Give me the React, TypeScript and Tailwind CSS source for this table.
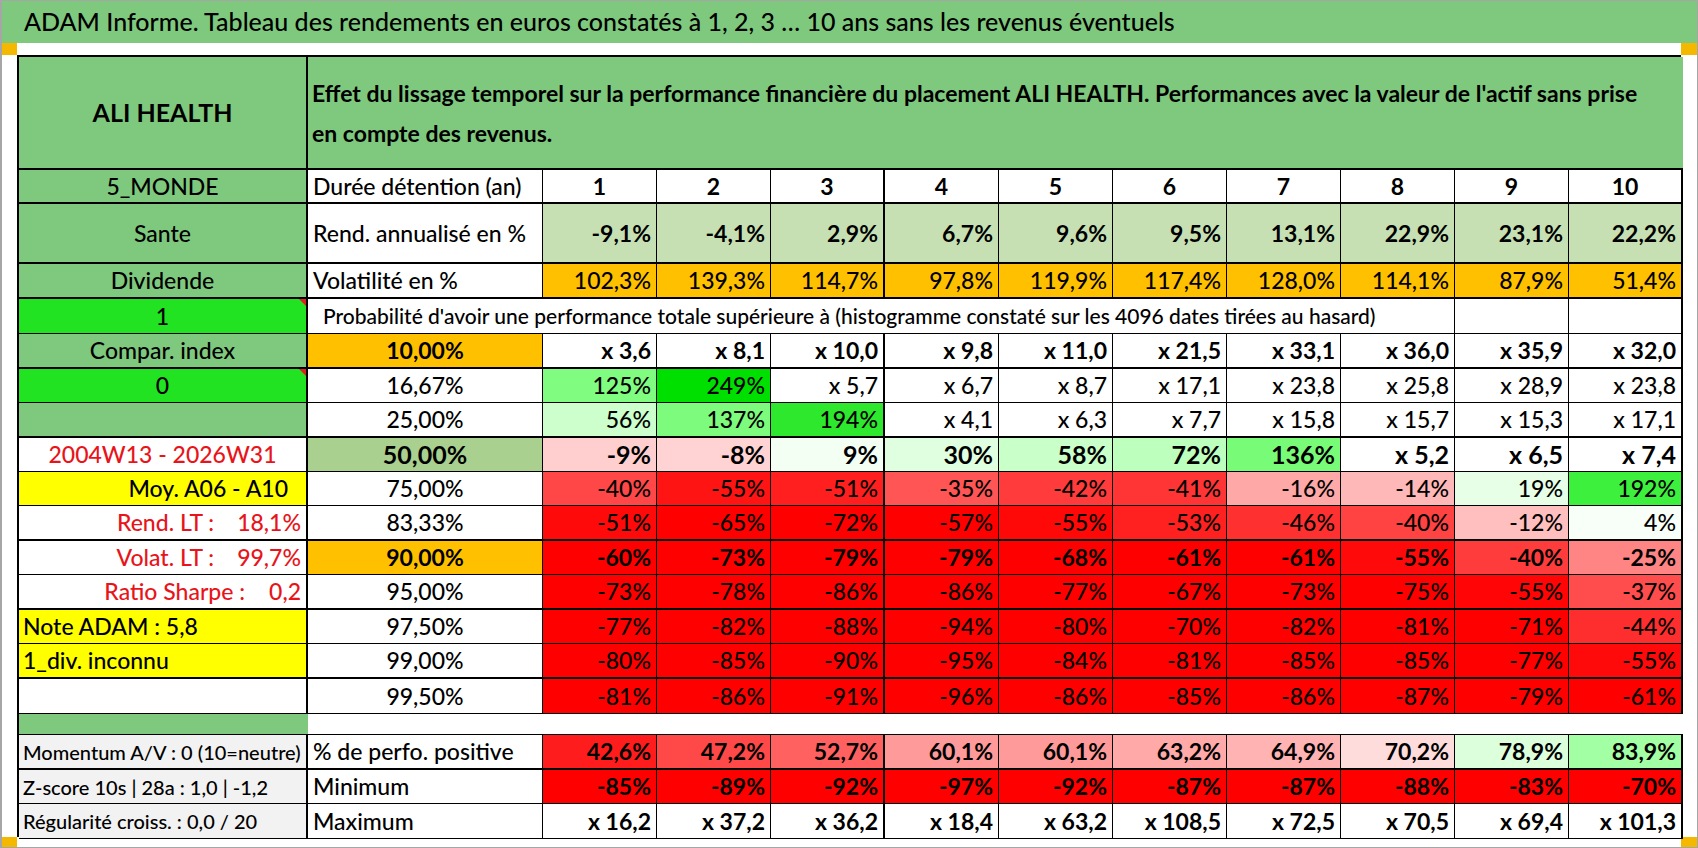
import type { ReactNode } from "react"
import { twMerge } from "tailwind-merge"

const GREEN = "bg-[#7fc97f]"
const LIME = "bg-[#22e322]"
const ORANGE = "bg-[#ffc000]"
const R = "bg-[#ff0000]"
const W = "bg-white"

function C({ className = "", children }: { className?: string; children?: ReactNode }) {
  return (
    <div
      className={twMerge(
        "relative flex items-center overflow-hidden whitespace-nowrap border-r border-b border-black leading-none",
        className
      )}
    >
      {children}
    </div>
  )
}

// little red comment marker in the corner of a cell
function Marker() {
  return (
    <span className="absolute right-0 top-0 h-0 w-0 border-l-[7px] border-t-[7px] border-l-transparent border-t-[#e02020]" />
  )
}

type RowProps = {
  vals: string[]
  bgs?: string[]
  className?: string
}

function Values({ vals, bgs, className = "" }: RowProps) {
  return (
    <>
      {vals.map((v, i) => (
        <C
          key={i}
          className={twMerge(
            "justify-end pr-[5px]",
            bgs ? bgs[i] : W,
            i === 2 || i === 9 ? "border-r-2" : "",
            className
          )}
        >
          {v}
        </C>
      ))}
    </>
  )
}

const reds = (last: string, ninth = R) => [R, R, R, R, R, R, R, R, ninth, last]

export default function App() {
  return (
    <div className="relative flex h-[848px] w-[1698px] flex-col overflow-hidden border-t border-r border-b border-l-2 border-[#a6a6a6] bg-white font-['Lato','Liberation_Sans',sans-serif] text-[23px] font-medium text-black">
      {/* title bar */}
      <div className={`flex h-[42px] items-center pl-[22px] text-[25px] ${GREEN}`}>
        ADAM Informe. Tableau des rendements en euros constatés à 1, 2, 3 … 10 ans sans les revenus éventuels
      </div>
      <div className="flex h-[12px]">
        <div className="w-[15px] bg-[#f5b800]" />
        <div className="flex-1" />
        <div className="w-[16px] bg-[#f5b800]" />
      </div>

      <div className="flex h-[782px]">
        <div className="w-[15px]" />
        <div className="grid w-[1664px] grid-cols-[289px_235px_repeat(10,114px)] grid-rows-[113px_34px_60px_35px_35px_35px_34px_35px_34px_34px_35px_34px_35px_34px_35px_35px_21px_35px_34px_35px] border-t-2 border-l-2 border-black">
          {/* header */}
          <C className={`justify-center border-r-2 border-b-2 text-[25px] font-bold ${GREEN}`}>ALI HEALTH</C>
          <C className={`col-span-11 border-r-0 border-b-2 pl-[4px] font-bold leading-[40px] ${GREEN}`}>
            <div>
              Effet du lissage temporel sur la performance financière du placement ALI HEALTH. Performances avec la valeur de l'actif sans prise
              <br />
              en compte des revenus.
            </div>
          </C>

          {/* durée */}
          <C className={`justify-center border-r-2 border-b-2 ${GREEN}`}>5_MONDE</C>
          <C className="border-b-2 pl-[5px]">Durée détention (an)</C>
          {["1", "2", "3", "4", "5", "6", "7", "8", "9", "10"].map((n, i) => (
            <C
              key={n}
              className={twMerge("justify-center border-b-2 font-bold", i === 2 || i === 9 ? "border-r-2" : "")}
            >
              {n}
            </C>
          ))}

          {/* rendement */}
          <C className={`justify-center border-r-2 border-b-2 ${GREEN}`}>Sante</C>
          <C className="border-b-2 pl-[5px]">Rend. annualisé en %</C>
          <Values
            vals={["-9,1%", "-4,1%", "2,9%", "6,7%", "9,6%", "9,5%", "13,1%", "22,9%", "23,1%", "22,2%"]}
            bgs={Array(10).fill("bg-[#c6e0b4]")}
            className="border-b-2 font-bold"
          />

          {/* volatilité */}
          <C className={`justify-center border-r-2 border-b-2 ${GREEN}`}>Dividende</C>
          <C className="border-b-2 pl-[5px]">Volatilité en %</C>
          <Values
            vals={["102,3%", "139,3%", "114,7%", "97,8%", "119,9%", "117,4%", "128,0%", "114,1%", "87,9%", "51,4%"]}
            bgs={Array(10).fill(ORANGE)}
            className="border-b-2"
          />

          {/* probabilité */}
          <C className={`justify-center border-r-2 ${LIME}`}>
            1
            <Marker />
          </C>
          <C className="col-span-9 pl-[15px] text-[21px]">
            Probabilité d'avoir une performance totale supérieure à (histogramme constaté sur les 4096 dates tirées au hasard)
          </C>
          <C />
          <C className="border-r-2" />

          {/* 10 % */}
          <C className={`justify-center border-r-2 border-b-2 ${GREEN}`}>Compar. index</C>
          <C className={`justify-center border-b-2 font-bold ${ORANGE}`}>10,00%</C>
          <Values
            vals={["x 3,6", "x 8,1", "x 10,0", "x 9,8", "x 11,0", "x 21,5", "x 33,1", "x 36,0", "x 35,9", "x 32,0"]}
            className="border-b-2 font-bold"
          />

          {/* 16,67 % */}
          <C className={`justify-center border-r-2 ${LIME}`}>
            0
            <Marker />
          </C>
          <C className="justify-center">16,67%</C>
          <Values
            vals={["125%", "249%", "x 5,7", "x 6,7", "x 8,7", "x 17,1", "x 23,8", "x 25,8", "x 28,9", "x 23,8"]}
            bgs={["bg-[#80fc80]", "bg-[#00e000]", W, W, W, W, W, W, W, W]}
          />

          {/* 25 % */}
          <C className={`border-r-2 border-b-2 ${GREEN}`} />
          <C className="justify-center border-b-2">25,00%</C>
          <Values
            vals={["56%", "137%", "194%", "x 4,1", "x 6,3", "x 7,7", "x 15,8", "x 15,7", "x 15,3", "x 17,1"]}
            bgs={["bg-[#ccffcc]", "bg-[#7dfb7d]", "bg-[#2ee82e]", W, W, W, W, W, W, W]}
            className="border-b-2"
          />

          {/* 50 % */}
          <C className="justify-center border-r-2 text-[#e8141a]">2004W13 - 2026W31</C>
          <C className="justify-center bg-[#a9d08e] text-[25px] font-bold">50,00%</C>
          <Values
            vals={["-9%", "-8%", "9%", "30%", "58%", "72%", "136%", "x 5,2", "x 6,5", "x 7,4"]}
            bgs={[
              "bg-[#ffcfcf]",
              "bg-[#ffd3d3]",
              "bg-[#f4fff4]",
              "bg-[#e0ffe0]",
              "bg-[#c9ffc9]",
              "bg-[#bdffbd]",
              "bg-[#78fc78]",
              W,
              W,
              W,
            ]}
            className="text-[25px] font-bold"
          />

          {/* 75 % */}
          <C className="justify-end border-r-2 bg-[#ffff00] pr-[18px]">Moy. A06 - A10</C>
          <C className="justify-center">75,00%</C>
          <Values
            vals={["-40%", "-55%", "-51%", "-35%", "-42%", "-41%", "-16%", "-14%", "19%", "192%"]}
            bgs={[
              "bg-[#ff4747]",
              "bg-[#ff1414]",
              "bg-[#ff1f1f]",
              "bg-[#ff5555]",
              "bg-[#ff3b3b]",
              "bg-[#ff3535]",
              "bg-[#ffa8a8]",
              "bg-[#ffb8b8]",
              "bg-[#e6ffe6]",
              "bg-[#3ef03e]",
            ]}
          />

          {/* 83,33 % */}
          <C className="justify-end gap-[23px] border-r-2 border-b-2 pr-[5px] text-[#e8141a]">
            <span>Rend. LT :</span>
            <span>18,1%</span>
          </C>
          <C className="justify-center border-b-2">83,33%</C>
          <Values
            vals={["-51%", "-65%", "-72%", "-57%", "-55%", "-53%", "-46%", "-40%", "-12%", "4%"]}
            bgs={[
              "bg-[#ff0a0a]",
              R,
              R,
              R,
              "bg-[#ff0808]",
              "bg-[#ff2020]",
              "bg-[#ff3030]",
              "bg-[#ff4242]",
              "bg-[#ffbfbf]",
              "bg-[#f8fff8]",
            ]}
            className="border-b-2"
          />

          {/* 90 % */}
          <C className="justify-end gap-[23px] border-r-2 pr-[5px] text-[#e8141a]">
            <span>Volat. LT :</span>
            <span>99,7%</span>
          </C>
          <C className={`justify-center font-bold ${ORANGE}`}>90,00%</C>
          <Values
            vals={["-60%", "-73%", "-79%", "-79%", "-68%", "-61%", "-61%", "-55%", "-40%", "-25%"]}
            bgs={[R, R, R, R, R, R, R, "bg-[#ff0a0a]", "bg-[#ff3c3c]", "bg-[#ff8484]"]}
            className="font-bold"
          />

          {/* 95 % */}
          <C className="justify-end gap-[24px] border-r-2 border-b-2 pr-[5px] text-[#e8141a]">
            <span>Ratio Sharpe :</span>
            <span>0,2</span>
          </C>
          <C className="justify-center border-b-2">95,00%</C>
          <Values
            vals={["-73%", "-78%", "-86%", "-86%", "-77%", "-67%", "-73%", "-75%", "-55%", "-37%"]}
            bgs={reds("bg-[#ff4c4c]", "bg-[#ff0505]")}
            className="border-b-2"
          />

          {/* 97,5 % */}
          <C className="border-r-2 bg-[#ffff00] pl-[4px]">Note ADAM : 5,8</C>
          <C className="justify-center">97,50%</C>
          <Values
            vals={["-77%", "-82%", "-88%", "-94%", "-80%", "-70%", "-82%", "-81%", "-71%", "-44%"]}
            bgs={reds("bg-[#ff2e2e]")}
          />

          {/* 99 % */}
          <C className="border-r-2 border-b-2 bg-[#ffff00] pl-[4px]">1_div. inconnu</C>
          <C className="justify-center border-b-2">99,00%</C>
          <Values
            vals={["-80%", "-85%", "-90%", "-95%", "-84%", "-81%", "-85%", "-85%", "-77%", "-55%"]}
            bgs={reds("bg-[#ff0a0a]")}
            className="border-b-2"
          />

          {/* 99,5 % */}
          <C className="border-r-2" />
          <C className="justify-center">99,50%</C>
          <Values
            vals={["-81%", "-86%", "-91%", "-96%", "-86%", "-85%", "-86%", "-87%", "-79%", "-61%"]}
            bgs={reds(R)}
          />

          {/* spacer */}
          <C className={`border-r-0 ${GREEN}`} />
          <C className="col-span-11 border-r-0" />

          {/* bottom block */}
          <C className="border-r-2 border-b-2 bg-[#f2f2f2] pl-[4px] text-[20px]">Momentum A/V : 0 (10=neutre)</C>
          <C className="border-b-2 pl-[5px]">% de perfo. positive</C>
          <Values
            vals={["42,6%", "47,2%", "52,7%", "60,1%", "60,1%", "63,2%", "64,9%", "70,2%", "78,9%", "83,9%"]}
            bgs={[
              "bg-[#ff1c1c]",
              "bg-[#ff4848]",
              "bg-[#ff6060]",
              "bg-[#ff9a9a]",
              "bg-[#ff9a9a]",
              "bg-[#ffa9a9]",
              "bg-[#ffb3b3]",
              "bg-[#ffdcdc]",
              "bg-[#dcffdc]",
              "bg-[#a3ffa3]",
            ]}
            className="border-b-2 font-bold"
          />

          <C className="border-r-2 bg-[#f2f2f2] pl-[4px] text-[20px]">Z-score 10s | 28a : 1,0 | -1,2</C>
          <C className="pl-[5px]">Minimum</C>
          <Values
            vals={["-85%", "-89%", "-92%", "-97%", "-92%", "-87%", "-87%", "-88%", "-83%", "-70%"]}
            bgs={reds(R)}
            className="font-bold"
          />

          <C className="border-r-2 bg-[#f2f2f2] pl-[4px] text-[20px]">Régularité croiss. : 0,0 / 20</C>
          <C className="pl-[5px]">Maximum</C>
          <Values
            vals={["x 16,2", "x 37,2", "x 36,2", "x 18,4", "x 63,2", "x 108,5", "x 72,5", "x 70,5", "x 69,4", "x 101,3"]}
            className="font-bold"
          />
        </div>
        <div className="flex-1" />
      </div>

      <div className="flex h-[10px]">
        <div className="w-[15px] bg-[#f5b800]" />
        <div className="flex-1" />
        <div className="w-[16px] bg-[#f5b800]" />
      </div>
    </div>
  )
}
